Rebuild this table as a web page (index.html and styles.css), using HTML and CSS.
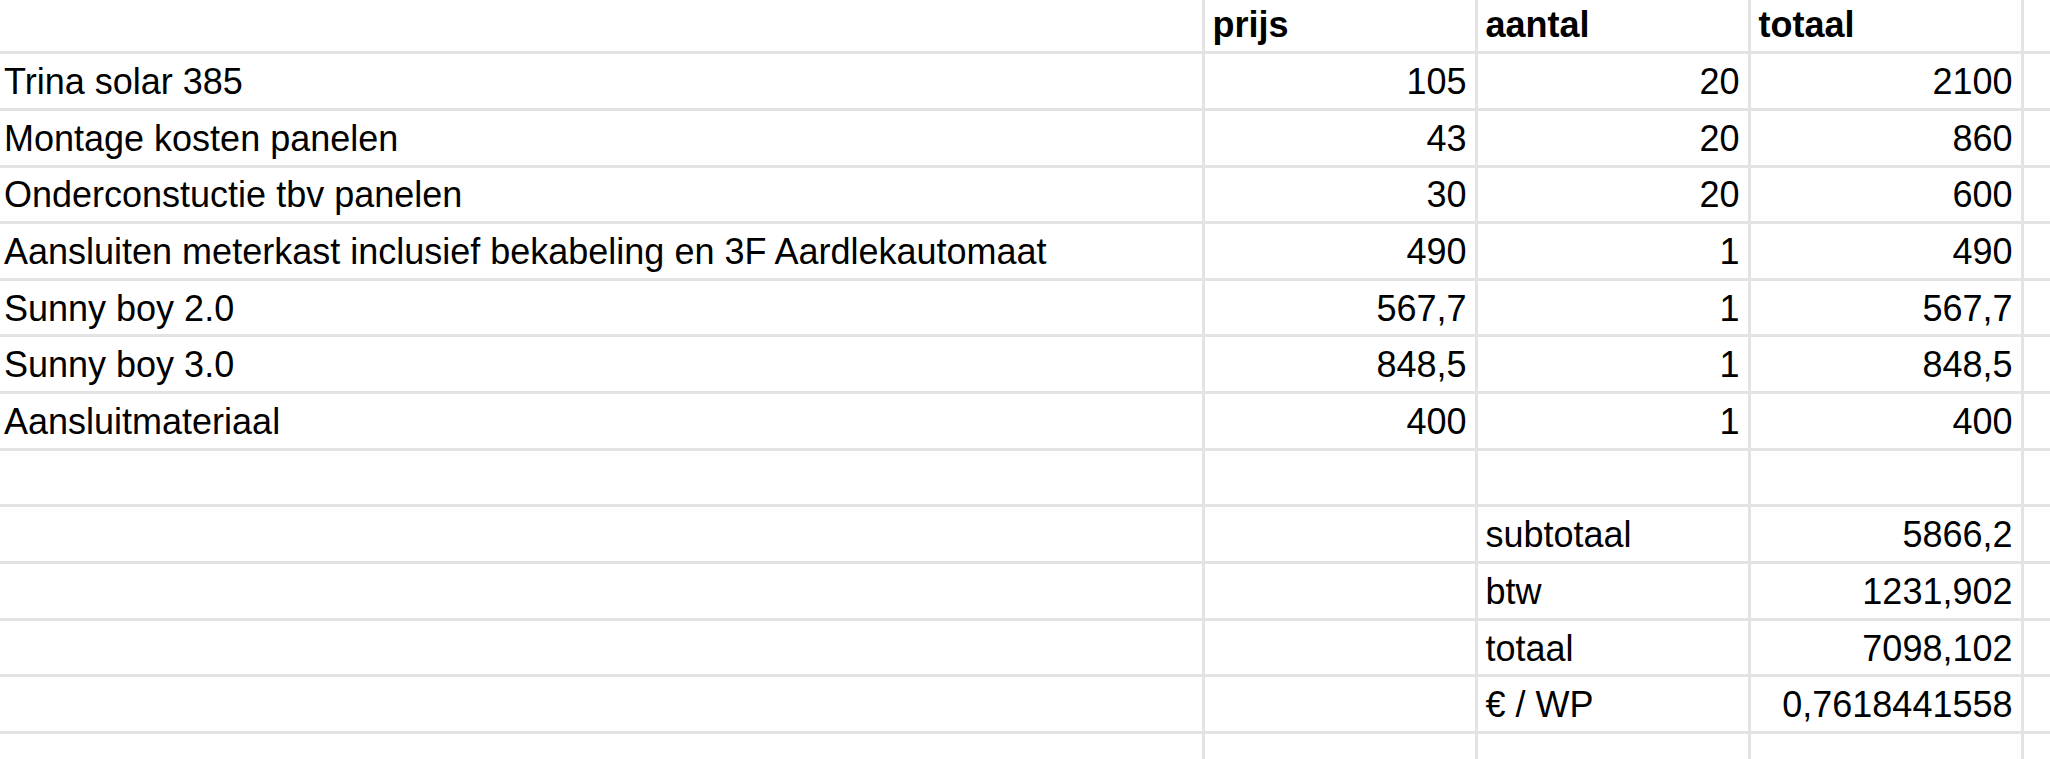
FILE: index.html
```html
<!DOCTYPE html>
<html lang="nl">
<head>
<meta charset="utf-8">
<title>Offerte zonnepanelen</title>
<link rel="stylesheet" href="styles.css">
</head>
<body>
<div class="sheet">
  <div class="c"></div><div class="c b">prijs</div><div class="c b">aantal</div><div class="c b">totaal</div><div class="c e"></div>

  <div class="c">Trina solar 385</div><div class="c n">105</div><div class="c n">20</div><div class="c n">2100</div><div class="c e"></div>
  <div class="c">Montage kosten panelen</div><div class="c n">43</div><div class="c n">20</div><div class="c n">860</div><div class="c e"></div>
  <div class="c">Onderconstuctie tbv panelen</div><div class="c n">30</div><div class="c n">20</div><div class="c n">600</div><div class="c e"></div>
  <div class="c">Aansluiten meterkast inclusief bekabeling en 3F Aardlekautomaat</div><div class="c n">490</div><div class="c n">1</div><div class="c n">490</div><div class="c e"></div>
  <div class="c">Sunny boy 2.0</div><div class="c n">567,7</div><div class="c n">1</div><div class="c n">567,7</div><div class="c e"></div>
  <div class="c">Sunny boy 3.0</div><div class="c n">848,5</div><div class="c n">1</div><div class="c n">848,5</div><div class="c e"></div>
  <div class="c">Aansluitmateriaal</div><div class="c n">400</div><div class="c n">1</div><div class="c n">400</div><div class="c e"></div>

  <div class="c"></div><div class="c"></div><div class="c"></div><div class="c"></div><div class="c e"></div>

  <div class="c"></div><div class="c"></div><div class="c">subtotaal</div><div class="c n">5866,2</div><div class="c e"></div>
  <div class="c"></div><div class="c"></div><div class="c">btw</div><div class="c n">1231,902</div><div class="c e"></div>
  <div class="c"></div><div class="c"></div><div class="c">totaal</div><div class="c n">7098,102</div><div class="c e"></div>
  <div class="c"></div><div class="c"></div><div class="c">€ / WP</div><div class="c n">0,7618441558</div><div class="c e"></div>

  <div class="c"></div><div class="c"></div><div class="c"></div><div class="c"></div><div class="c e"></div>
</div>
</body>
</html>
```

FILE: styles.css
```css
html, body {
  margin: 0;
  padding: 0;
  background: #ffffff;
  overflow: hidden;
}

body {
  width: 2050px;
  height: 759px;
  font-family: "Liberation Sans", Arial, sans-serif;
  font-size: 36px;
  color: #000000;
}

.sheet {
  display: grid;
  grid-template-columns: 1204.5px 273px 273px 273px 1fr;
  grid-auto-rows: 56.667px;
  margin-top: -2.47px;
}

.c {
  box-sizing: border-box;
  display: flex;
  align-items: center;
  padding: 2px 8px 0;
  border-right: 3px solid #e3e3e3;
  border-bottom: 3px solid #e3e3e3;
  white-space: nowrap;
  overflow: hidden;
}

.c:nth-child(5n+1) {
  padding-left: 4px;
}

.c.e {
  border-right: none;
}

.b {
  font-weight: bold;
}

.n {
  justify-content: flex-end;
}
```
